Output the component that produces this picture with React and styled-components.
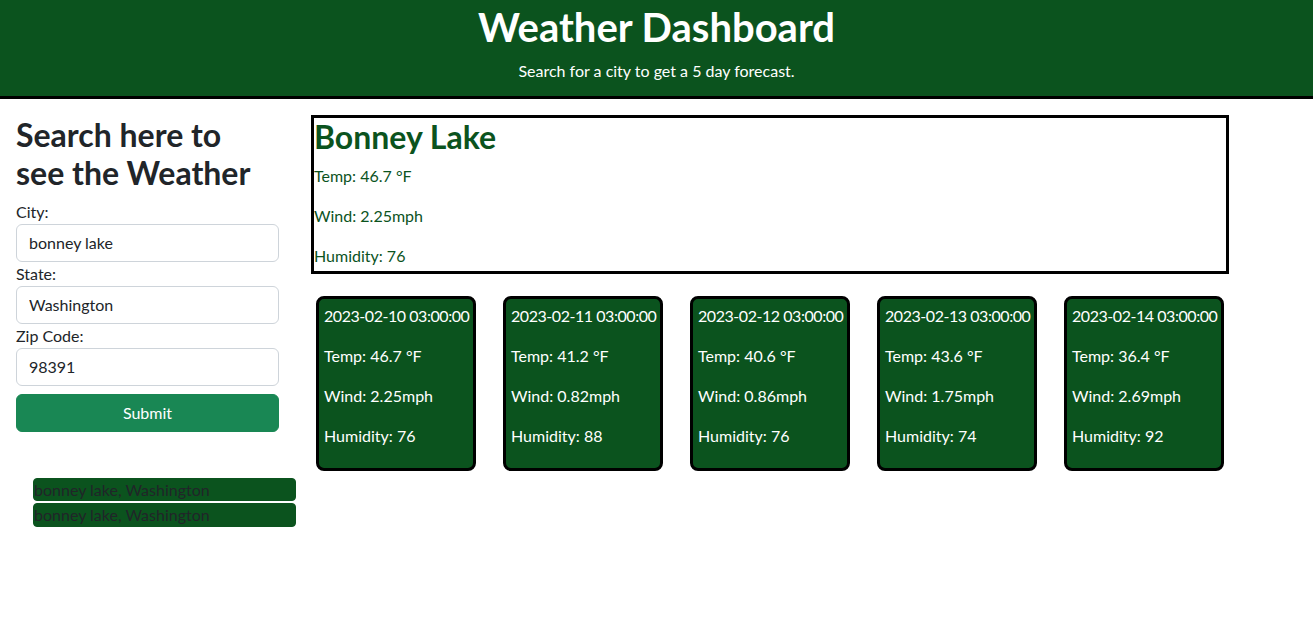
import React from "react";
import styled, { createGlobalStyle } from "styled-components";

const FONT = `"Lato", "Liberation Sans", sans-serif`;
const GREEN = "#0b531e";

const Global = createGlobalStyle`
  *, *::before, *::after { box-sizing: border-box; }
  body {
    margin: 0;
    font-family: ${FONT};
    font-size: 16px;
    line-height: 1.5;
    color: #212529;
    background: #fff;
  }
`;

const Header = styled.header`
  background: ${GREEN};
  border-bottom: 3px solid #000;
  padding: 3px 0 13px;
  text-align: center;
  color: #fff;
`;

const Title = styled.h1`
  margin: 0 0 8px;
  font-size: 40px;
  font-weight: 700;
  line-height: 48px;
`;

const Subtitle = styled.p`
  margin: 0;
  font-size: 16px;
  line-height: 24px;
`;

const Layout = styled.div`
  display: flex;
  align-items: flex-start;
  padding: 16px 0 0 16px;
`;

const Aside = styled.aside`
  width: 263px;
  flex: none;
  display: flex;
  flex-direction: column;
`;

const SearchHeading = styled.h2`
  margin: 1px 0 7px;
  font-size: 32px;
  font-weight: 700;
  line-height: 38.4px;
`;

const Label = styled.label`
  display: block;
  line-height: 24px;
`;

const Input = styled.input`
  display: block;
  width: 100%;
  height: 38px;
  padding: 6px 12px;
  font: inherit;
  color: #212529;
  border: 1px solid #ced4da;
  border-radius: 6px;
  background: #fff;
`;

const Submit = styled.button`
  margin-top: 8px;
  width: 100%;
  height: 38px;
  padding: 6px 12px;
  font: inherit;
  color: #fff;
  background: #198754;
  border: 1px solid #198754;
  border-radius: 6px;
`;

const History = styled.div`
  margin: 46px 0 0 17px;
  display: flex;
  flex-direction: column;
  gap: 2px;
`;

const HistoryButton = styled.button`
  width: 263px;
  padding: 0;
  text-align: left;
  font-family: ${FONT};
  font-size: 16px;
  line-height: 21.4px;
  color: #212529;
  background: ${GREEN};
  border: 1px solid ${GREEN};
  border-radius: 4px;
`;

const Main = styled.main`
  margin-left: 32px;
  width: 918px;
  flex: none;
`;

const Current = styled.section`
  height: 159px;
  border: 3px solid #000;
  color: ${GREEN};
`;

const CityName = styled.h2`
  margin: 0 0 8px;
  font-size: 32px;
  font-weight: 700;
  line-height: 38.4px;
`;

const Stat = styled.p`
  margin: 0 0 16px;
  line-height: 24px;
  white-space: nowrap;
  letter-spacing: ${(p) => (p.$tight ? "-0.45px" : "normal")};
`;

const Forecast = styled.div`
  margin-top: 22px;
  padding: 0 5px;
  display: flex;
  justify-content: space-between;
`;

const Card = styled.div`
  width: 160px;
  padding: 5px 0 4px 5px;
  background: ${GREEN};
  color: #fff;
  border: 3px solid #000;
  border-radius: 8px;
  overflow: hidden;
  letter-spacing: -0.2px;
`;

const days = [
  { date: "2023-02-10 03:00:00", temp: "46.7", wind: "2.25", hum: 76 },
  { date: "2023-02-11 03:00:00", temp: "41.2", wind: "0.82", hum: 88 },
  { date: "2023-02-12 03:00:00", temp: "40.6", wind: "0.86", hum: 76 },
  { date: "2023-02-13 03:00:00", temp: "43.6", wind: "1.75", hum: 74 },
  { date: "2023-02-14 03:00:00", temp: "36.4", wind: "2.69", hum: 92 },
];

export default function App() {
  return (
    <>
      <Global />
      <Header>
        <Title>Weather Dashboard</Title>
        <Subtitle>Search for a city to get a 5 day forecast.</Subtitle>
      </Header>
      <Layout>
        <Aside>
          <SearchHeading>
            Search here to
            <br />
            see the Weather
          </SearchHeading>
          <Label htmlFor="city">City:</Label>
          <Input id="city" defaultValue="bonney lake" />
          <Label htmlFor="state">State:</Label>
          <Input id="state" defaultValue="Washington" />
          <Label htmlFor="zip">Zip Code:</Label>
          <Input id="zip" defaultValue="98391" />
          <Submit type="button">Submit</Submit>
          <History>
            <HistoryButton type="button">bonney lake, Washington</HistoryButton>
            <HistoryButton type="button">bonney lake, Washington</HistoryButton>
          </History>
        </Aside>
        <Main>
          <Current>
            <CityName>Bonney Lake</CityName>
            <Stat>Temp: 46.7 °F</Stat>
            <Stat>Wind: 2.25mph</Stat>
            <Stat>Humidity: 76</Stat>
          </Current>
          <Forecast>
            {days.map((d) => (
              <Card key={d.date}>
                <Stat $tight>{d.date}</Stat>
                <Stat>Temp: {d.temp} °F</Stat>
                <Stat>Wind: {d.wind}mph</Stat>
                <Stat>Humidity: {d.hum}</Stat>
              </Card>
            ))}
          </Forecast>
        </Main>
      </Layout>
    </>
  );
}
